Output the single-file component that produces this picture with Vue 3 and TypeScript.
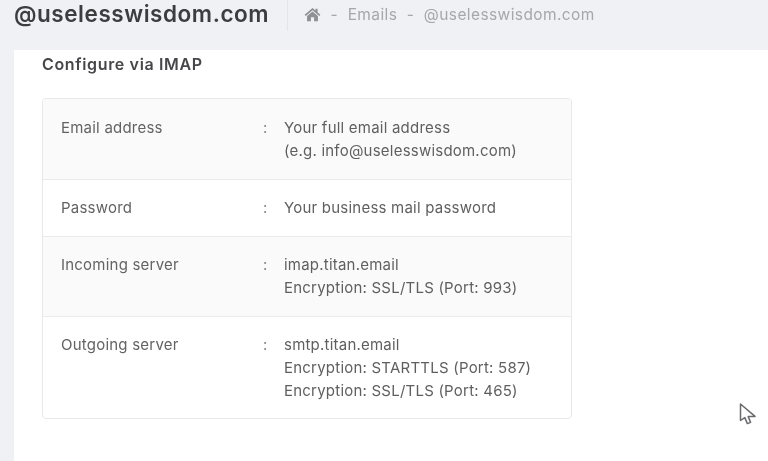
<template>
  <div class="page">
    <header class="topbar">
      <h1 class="domain">@uselesswisdom.com</h1>
      <nav class="crumbs">
        <svg class="home" viewBox="0 0 18 16" aria-hidden="true">
          <path d="M9 1 L0.6 8.2 L1.8 9.5 L9 3.4 L16.2 9.5 L17.4 8.2 L14.4 5.6 L14.4 1.8 L12.2 1.8 L12.2 3.7 Z" />
          <path d="M3.2 9.6 L9 4.8 L14.8 9.6 L14.8 15.2 L10.7 15.2 L10.7 11 L7.3 11 L7.3 15.2 L3.2 15.2 Z" />
        </svg>
        <span class="sep">-</span>
        <span>Emails</span>
        <span class="sep">-</span>
        <span>@uselesswisdom.com</span>
      </nav>
    </header>
    <main class="panel">
      <h2 class="title">Configure via IMAP</h2>
      <div class="card">
        <div v-for="row in rows" :key="row.label" class="row" :class="{ 'is-shaded': row.shaded }">
          <div class="label">{{ row.label }}</div>
          <div class="colon">:</div>
          <div class="value">
            <div v-for="line in row.lines" :key="line">{{ line }}</div>
          </div>
        </div>
      </div>
      <svg class="cursor" viewBox="0 0 18 23" aria-hidden="true">
        <path d="M1.5 1 L1.5 17.5 L5.8 14.6 L8.4 20.6 L11.6 19.4 L9.2 13.6 L16 13.4 Z" />
      </svg>
    </main>
  </div>
</template>

<script setup lang="ts">
type Row = {
  label: string;
  lines: string[];
  shaded: boolean;
};

const rows: Row[] = [
  {
    label: 'Email address',
    lines: ['Your full email address', '(e.g. info@uselesswisdom.com)'],
    shaded: true,
  },
  { label: 'Password', lines: ['Your business mail password'], shaded: false },
  {
    label: 'Incoming server',
    lines: ['imap.titan.email', 'Encryption: SSL/TLS (Port: 993)'],
    shaded: true,
  },
  {
    label: 'Outgoing server',
    lines: ['smtp.titan.email', 'Encryption: STARTTLS (Port: 587)', 'Encryption: SSL/TLS (Port: 465)'],
    shaded: false,
  },
];
</script>

<style>
html,
body {
  background: #f0f1f5;
}
</style>

<style scoped>
.page {
  width: 768px;
  height: 461px;
  overflow: hidden;
  display: flex;
  flex-direction: column;
  background: #f0f1f5;
  font-family: Inter, 'Liberation Sans', sans-serif;
  color: #5c5c5c;
  filter: blur(0.45px);
}

.topbar {
  height: 50px;
  flex: none;
  display: flex;
  align-items: flex-start;
  padding-left: 14px;
  box-sizing: border-box;
}

.domain {
  margin: 0;
  padding: 2px 18px 0 0;
  height: 29px;
  font-size: 22.5px;
  line-height: 24px;
  font-weight: 600;
  letter-spacing: 0.55px;
  color: #3d3d40;
  border-right: 1px solid #e4e5e9;
}

.crumbs {
  display: flex;
  align-items: center;
  gap: 9.5px;
  height: 29px;
  padding-left: 16px;
  font-size: 15.5px;
  letter-spacing: 0.4px;
  color: #a6a7aa;
}

.home {
  width: 17px;
  height: 15px;
  fill: #8f9093;
}

.panel {
  flex: 1;
  position: relative;
  margin-left: 14px;
  padding: 0 182px 0 28px;
  background: #fff;
}

.title {
  margin: 0 0 23px;
  padding-top: 4px;
  font-size: 16px;
  line-height: 21px;
  font-weight: 600;
  letter-spacing: 0.65px;
  color: #47474a;
}

.card {
  width: 530px;
  box-sizing: border-box;
  border: 1px solid #e8e8ea;
  border-radius: 4px;
  overflow: hidden;
  font-size: 15px;
  line-height: 23px;
  letter-spacing: 0.22px;
}

.row {
  display: flex;
  padding: 16px 18px 17px;
  border-top: 1px solid #ebebed;
}

.row:first-child {
  border-top: 0;
  padding-top: 17px;
}

.row:last-child {
  padding-bottom: 16px;
}

.row.is-shaded {
  background: #fafafa;
}

.label {
  width: 202px;
  flex: none;
  color: #636365;
}

.colon {
  width: 21px;
  flex: none;
  color: #8a8a8c;
}

.value {
  color: #5f5f61;
}

.cursor {
  position: absolute;
  left: 725px;
  top: 353px;
  width: 18px;
  height: 23px;
  fill: #fff;
  stroke: #6a6a6c;
  stroke-width: 1.5;
  stroke-linejoin: round;
}
</style>
